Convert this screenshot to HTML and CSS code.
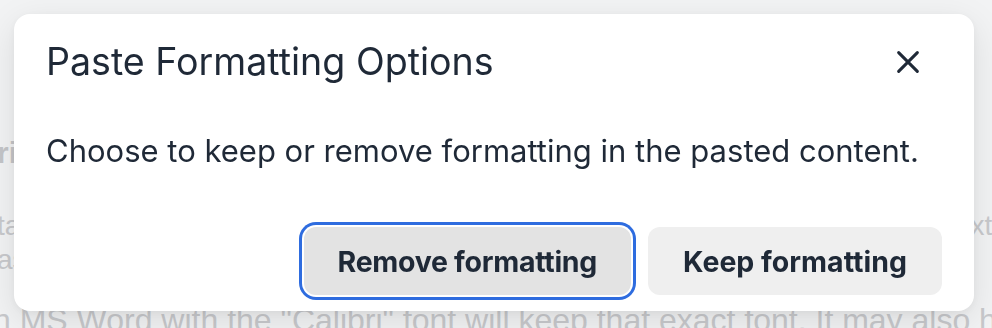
FILE: index.html
```html
<!DOCTYPE html>
<html lang="en">
<head>
<meta charset="utf-8">
<title>Paste Formatting Options</title>
<link rel="stylesheet" href="styles.css">
</head>
<body>
  <main class="page">
    <h2 class="bg-heading">rich text pasting</h2>
    <p class="bg-para">
      <span class="bg-line bg-line-split"><span class="bg-left">tant: pasted content keeps its styles unless you choose</span><span class="bg-right">extra</span></span>
      <span class="bg-line">as well as colours, sizes and spacing.</span>
    </p>
    <p class="bg-para bg-para-large">
      <span class="bg-line">n MS Word with the "Calibri" font will keep that exact font. It may also have</span>
    </p>
  </main>

  <div class="overlay">
    <div class="dialog" role="dialog" aria-labelledby="dlg-title">
      <div class="dialog-header">
        <h1 id="dlg-title" class="dialog-title">Paste Formatting Options</h1>
        <button class="close-btn" type="button" aria-label="Close">
          <svg width="32" height="32" viewBox="0 0 24 24" fill="none" stroke="currentColor" stroke-width="2.3" stroke-linecap="round">
            <path d="M5 5L19 19M19 5L5 19"/>
          </svg>
        </button>
      </div>
      <p class="dialog-text">Choose to keep or remove formatting in the pasted content.</p>
      <div class="dialog-footer">
        <button class="btn btn-remove" type="button">Remove formatting</button>
        <button class="btn btn-keep" type="button">Keep formatting</button>
      </div>
    </div>
  </div>
</body>
</html>
```

FILE: styles.css
```css
html, body {
  margin: 0;
  height: 100%;
  overflow: hidden;
}

body {
  background: #f2f3f4;
  font-family: "Liberation Sans", Arial, sans-serif;
  color: #c8c9cc;
}

.page {
  margin-left: -3px;
  padding-top: 135px;
  white-space: nowrap;
}

.bg-heading {
  margin: 0 0 38px;
  font-size: 30px;
  line-height: 36px;
  font-weight: 700;
  color: #c4c5c8;
}

.bg-para {
  margin: 0 0 26px;
  font-size: 28px;
  line-height: 34px;
}

.bg-para-large {
  font-size: 32px;
  margin-left: -4px;
}

.bg-line {
  display: block;
}

.bg-line-split {
  display: flex;
}

.bg-left {
  flex: 0 0 958px;
  overflow: hidden;
}

.overlay {
  position: fixed;
  inset: 0;
  display: flex;
  align-items: flex-start;
  justify-content: flex-start;
  padding: 14px;
}

.dialog {
  width: 960px;
  box-sizing: border-box;
  padding: 24px 32px 16px;
  background: #ffffff;
  border-radius: 16px;
  box-shadow: 0 10px 36px rgba(0, 0, 0, 0.10), 0 2px 10px rgba(0, 0, 0, 0.05);
  font-family: Inter, "Noto Sans", sans-serif;
  color: #1f2937;
}

.dialog-header {
  display: flex;
  align-items: center;
  justify-content: space-between;
  height: 48px;
}

.dialog-title {
  margin: 0;
  font-size: 37.6px;
  line-height: 48px;
  font-weight: 400;
}

.close-btn {
  width: 48px;
  height: 48px;
  margin-right: 10px;
  padding: 0;
  border: none;
  background: transparent;
  color: #1f2937;
  display: grid;
  place-items: center;
  cursor: pointer;
}

.dialog-text {
  margin: 45px 0 0;
  font-size: 31px;
  line-height: 40px;
  font-weight: 400;
}

.dialog-footer {
  display: flex;
  justify-content: flex-end;
  gap: 17px;
  margin-top: 56px;
}

.btn {
  height: 68px;
  padding: 0 35px;
  border: none;
  border-radius: 12px;
  font-family: Inter, "Noto Sans", sans-serif;
  font-size: 28.5px;
  font-weight: 700;
  color: #1f2937;
  cursor: pointer;
}

.btn-remove {
  padding: 0 34px;
  letter-spacing: -0.3px;
  background: #e3e3e3;
  box-shadow: 0 0 0 2px #ffffff, 0 0 0 5px #2e6cdf;
}

.btn-keep {
  background: #efefef;
}
```
